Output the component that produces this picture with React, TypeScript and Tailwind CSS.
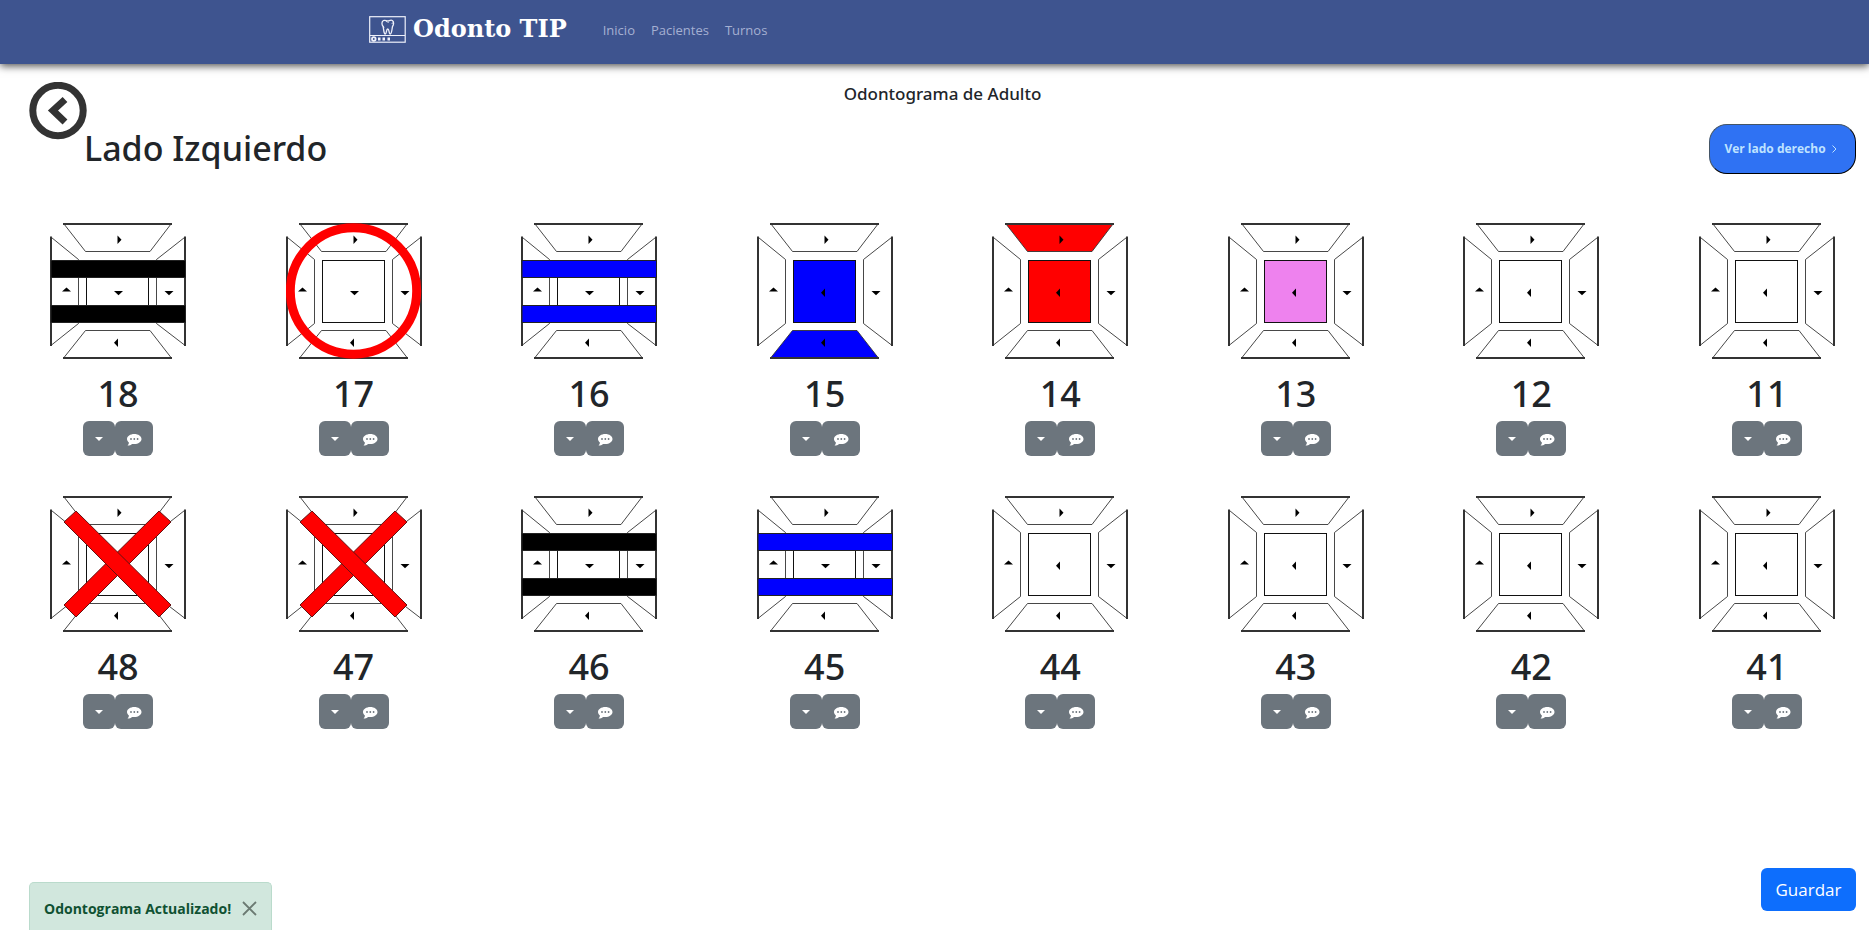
type Mark = "black" | "blue" | "circle" | "cross";

type Tooth = {
  id: number;
  mark?: Mark;
  top?: string;
  center?: string;
  bottom?: string;
};

const upper: Tooth[] = [
  { id: 18, mark: "black" },
  { id: 17, mark: "circle" },
  { id: 16, mark: "blue" },
  { id: 15, center: "#0000ff", bottom: "#0000ff" },
  { id: 14, center: "#ff0000", top: "#ff0000" },
  { id: 13, center: "#ee82ee" },
  { id: 12 },
  { id: 11 },
];

const lower: Tooth[] = [
  { id: 48, mark: "cross" },
  { id: 47, mark: "cross" },
  { id: 46, mark: "black" },
  { id: 45, mark: "blue" },
  { id: 44 },
  { id: 43 },
  { id: 42 },
  { id: 41 },
];

function ToothDrawing({ tooth }: { tooth: Tooth }) {
  const { mark, top = "#fff", center = "#fff", bottom = "#fff" } = tooth;
  const bar = mark === "black" ? "#000" : "#0000ff";
  return (
    <svg viewBox="0 0 136 136" className="block size-[136px]" role="img" aria-label={`Diente ${tooth.id}`}>
      <g stroke="#333" strokeWidth="0.9">
        <path d="M14 1H121L100 28.5H35.5Z" fill={top} />
        <path d="M14 134.5H121L100 107.5H35.5Z" fill={bottom} />
        <path d="M1.5 14.5L28.5 36.5V100.5L1.5 122Z" fill="#fff" />
        <path d="M134.5 14.5L106.5 36.5V100.5L134.5 122Z" fill="#fff" />
      </g>
      <g stroke="#333" strokeWidth="2">
        <path d="M13 1H122M13 135H122M1 13.5V123M135 13.5V123" />
      </g>
      <rect x="36.5" y="37.5" width="62" height="62" fill={center} stroke="#111" />
      <g>
        <path d="M67.5 12.5V21L71.5 16.7Z" />
        <path d="M68 115.5V124L64 119.7Z" />
        <path d="M12 68.5H21L16.5 64.5Z" />
        <path d="M114.5 68H123.5L119 72.2Z" />
        {mark ? <path d="M64 68H73L68.5 72.2Z" /> : <path d="M68 65.5V74L64 69.7Z" />}
      </g>
      {(mark === "black" || mark === "blue") && (
        <g fill={bar} stroke="#222" strokeWidth="1">
          <rect x="1" y="37.5" width="134.5" height="17" />
          <rect x="1" y="82.5" width="134.5" height="17" />
        </g>
      )}
      {mark === "circle" && <circle cx="67.5" cy="68" r="63.2" fill="none" stroke="#ff0000" strokeWidth="9" />}
      {mark === "cross" && (
        <g fill="#ff0000" stroke="#611" strokeWidth="1">
          <path d="M109 15L121 26L26 121L14 109Z" />
          <path d="M26 15L14 26L109 121L121 109Z" />
        </g>
      )}
    </svg>
  );
}

function ToothCard({ tooth }: { tooth: Tooth }) {
  return (
    <li className="flex flex-col items-center">
      <ToothDrawing tooth={tooth} />
      <h2 className="mt-[11px] font-['Noto_Sans',sans-serif] text-4xl leading-12 font-medium">{tooth.id}</h2>
      <div className="mt-[3px] flex">
        <button
          type="button"
          aria-label={`Opciones del diente ${tooth.id}`}
          className="flex h-[35px] w-8 items-center justify-center rounded-md bg-[#6c757d]"
        >
          <svg viewBox="0 0 8 4" className="h-1 w-2" fill="#fff">
            <path d="M0 0H8L4 4Z" />
          </svg>
        </button>
        <button
          type="button"
          aria-label={`Comentarios del diente ${tooth.id}`}
          className="flex h-[35px] w-[38px] items-center justify-center rounded-md bg-[#6c757d]"
        >
          <svg viewBox="0 0 16 14" className="mt-[2px] h-[14px] w-4" fill="#fff">
            <path d="M8.3 1C4.3 1 1 3.2 1 6c0 1.300.7 2.500 1.900 3.400C2.900 10.700 2.200 11.700 1.500 12.600c1.900 0 3.500-.7 4.500-1.700.7.200 1.500.2 2.300.2 4 0 7.200-2.300 7.200-5.100S12.300 1 8.300 1Z" />
            <g fill="#6c757d">
              <circle cx="5" cy="6" r="0.9" />
              <circle cx="8.3" cy="6" r="0.9" />
              <circle cx="11.6" cy="6" r="0.9" />
            </g>
          </svg>
        </button>
      </div>
    </li>
  );
}

function Logo() {
  return (
    <a href="#" className="flex items-center gap-[7px] text-white">
      <svg viewBox="0 0 37 27" className="h-[27px] w-[37px]" fill="none" stroke="#eef0fa">
        <rect x="0.7" y="0.7" width="35.5" height="25.5" strokeWidth="1.2" />
        <path d="M1 19.5H36" strokeWidth="1.2" />
        <path
          d="M14.500 4.500c1.500-.8 2.800.5 4.200.4 1.500 0 3-1.300 4.600-.4 1.900 1.200 1.500 4.200.2 6-.6 2.700-.6 7-2.200 7.500-1.500.3-.9-5-2.600-5-1.600 0-1 5.300-2.600 5-1.500-.4-1.300-5-2-7.500-1.500-1.800-1.700-4.800.4-6Z"
          strokeWidth="1.3"
        />
        <path d="M17 5.300c1 .8 2 .9 3 1M15 12l-.6-2M23 8l.4-1.500" strokeWidth="0.8" />
        <circle cx="4.8" cy="23" r="1.8" strokeWidth="1.8" />
        <path d="M9 23h2.500M13.500 23h2.500M18.500 23h2.500" strokeWidth="3" />
      </svg>
      <span className="font-['DejaVu_Serif',serif] text-2xl leading-8 font-bold">Odonto TIP</span>
    </a>
  );
}

export default function App() {
  return (
    <div className="flex min-h-screen flex-col overflow-x-hidden bg-white font-['Open_Sans',sans-serif] text-[#212529]">
      <header className="flex h-16 items-start bg-[#3e548f] pt-[13px] pl-[369px] shadow-[0_2px_8px_rgba(0,0,0,0.7)]">
        <Logo />
        <nav className="ml-9 flex gap-4 pt-[7px] text-[13px] leading-5 text-[#a5b0d2]">
          <a href="#">Inicio</a>
          <a href="#">Pacientes</a>
          <a href="#">Turnos</a>
        </nav>
      </header>
      <main className="flex flex-1 flex-col">
        <div className="grid grid-cols-[1fr_auto_1fr] pt-[18px] pr-[13px] pl-[29px]">
          <button type="button" aria-label="Volver" className="size-[58px]">
            <svg viewBox="0 0 58 58" className="size-[58px]" fill="none" stroke="#333">
              <circle cx="29" cy="28.5" r="25.2" strokeWidth="7" />
              <path d="M36 17.5L24 28.5L36 40" strokeWidth="7" />
            </svg>
          </button>
          <h1 className="font-['Noto_Sans',sans-serif] text-[17px] leading-6 font-medium">Odontograma de Adulto</h1>
          <span />
        </div>
        <div className="-mt-4 flex items-start justify-between pr-[13px] pl-[84px]">
          <h2 className="font-['Noto_Sans',sans-serif] text-[34px] leading-12 font-medium">Lado Izquierdo</h2>
          <button
            type="button"
            className="flex h-[50px] w-[147px] items-center justify-center gap-[6px] rounded-[18px] border border-t-[#456] border-r-black border-b-black border-l-[#456] bg-[#2f72f3] pr-1 text-xs font-bold text-[#bfe3ff]"
          >
            Ver lado derecho
            <svg viewBox="0 0 5 8" className="h-2 w-[5px]" fill="none" stroke="currentColor">
              <path d="M0.5 0.5L4 4L0.5 7.5" />
            </svg>
          </button>
        </div>
        <div className="flex flex-col gap-10 pt-[49px] pr-[34px] pl-[50px]">
          <ul className="flex justify-between">
            {upper.map((t) => (
              <ToothCard key={t.id} tooth={t} />
            ))}
          </ul>
          <ul className="flex justify-between">
            {lower.map((t) => (
              <ToothCard key={t.id} tooth={t} />
            ))}
          </ul>
        </div>
        <div className="mt-auto flex items-end justify-between pr-[13px] pl-[29px]">
          <div
            role="status"
            className="flex h-12 w-[243px] items-center justify-between rounded-t-[5px] border border-b-0 border-[#badbcc] bg-[#d1e7dd] pt-1 pr-[14px] pl-[14px] text-sm font-bold text-[#0f5132]"
          >
            Odontograma Actualizado!
            <button type="button" aria-label="Cerrar">
              <svg viewBox="0 0 15 15" className="size-[15px]" fill="none" stroke="#6b7a72" strokeWidth="1.8">
                <path d="M1 1L14 14M14 1L1 14" />
              </svg>
            </button>
          </div>
          <button type="button" className="mb-[19px] h-[43px] w-[95px] rounded-md bg-[#0d6efd] text-[17px] text-white">
            Guardar
          </button>
        </div>
      </main>
    </div>
  );
}
